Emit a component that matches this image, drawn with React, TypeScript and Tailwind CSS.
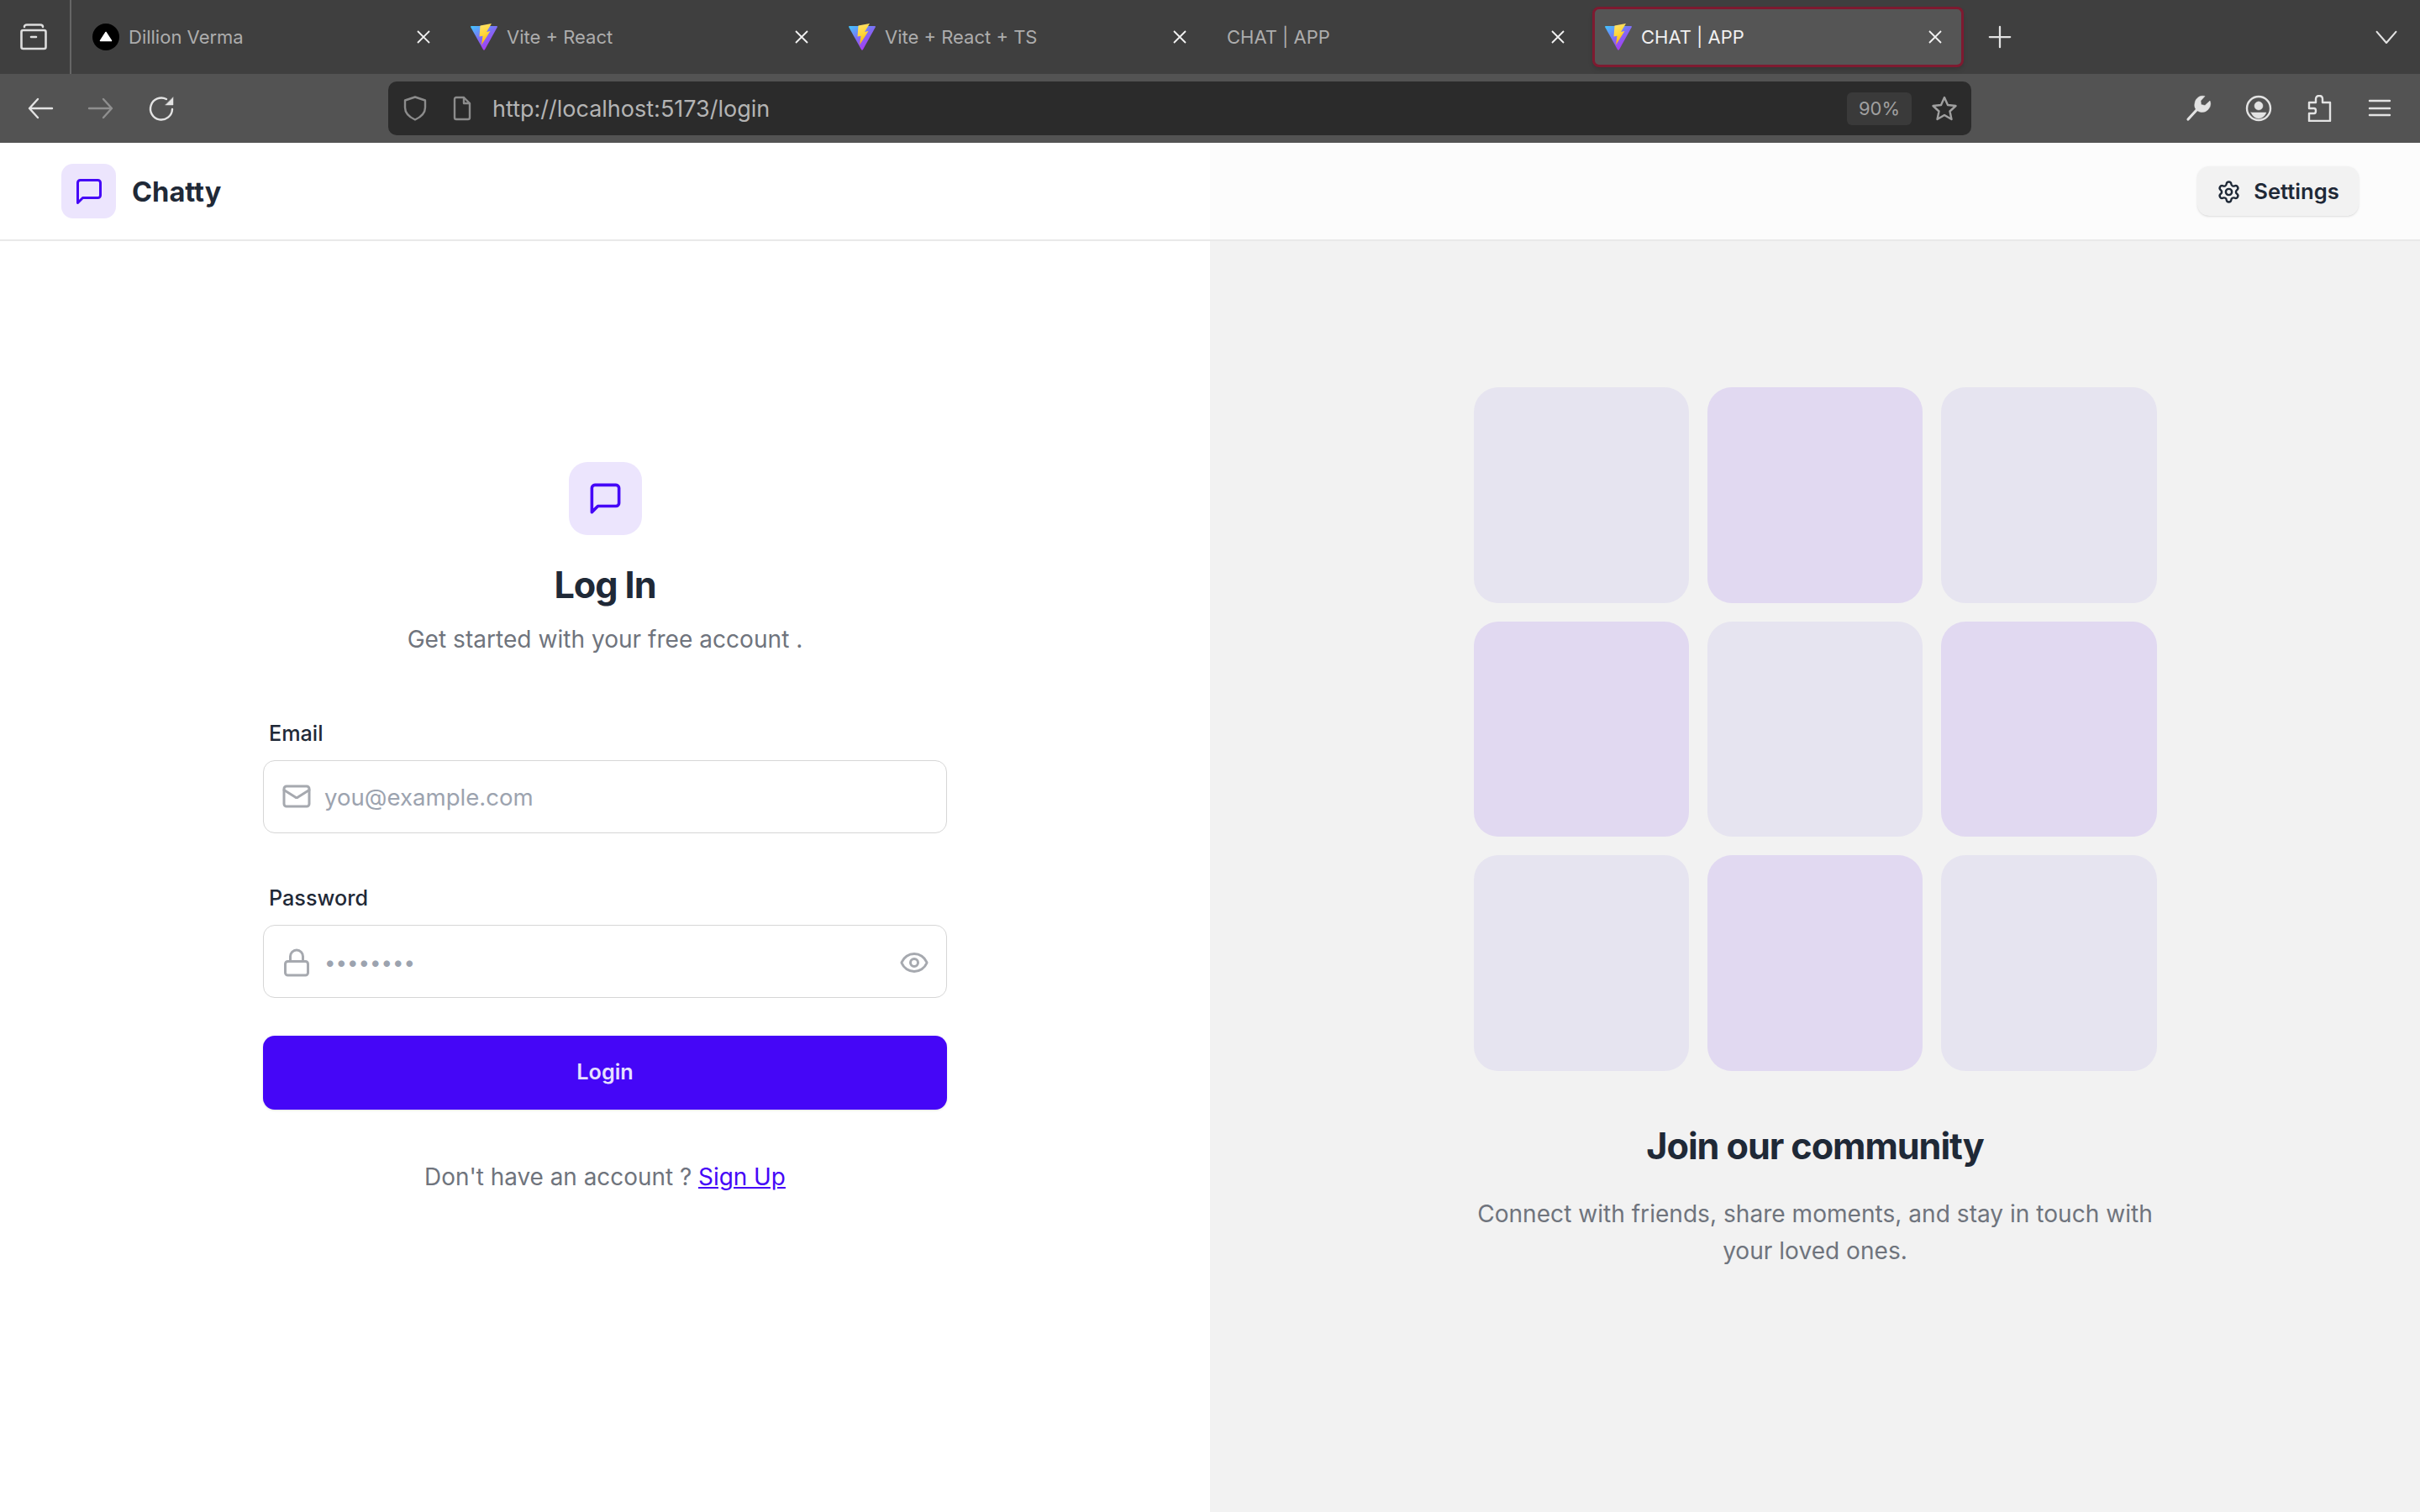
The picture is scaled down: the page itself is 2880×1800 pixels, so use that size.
import { Eye, Lock, Mail, Settings } from 'lucide-react'

const tabs = [
  { title: 'Dillion Verma', icon: 'dot' },
  { title: 'Vite + React', icon: 'vite' },
  { title: 'Vite + React + TS', icon: 'vite' },
  { title: 'CHAT | APP', icon: 'none' },
  { title: 'CHAT | APP', icon: 'vite', active: true },
]

const tiles = [false, true, false, true, false, true, false, true, false]

// ─── Browser chrome icons ──────────────────────────────────────────────

function ViteIcon() {
  return (
    <svg width="32" height="32" viewBox="0 0 32 32" className="shrink-0" aria-hidden="true">
      <defs>
        <linearGradient id="vite-a" x1="0" y1="0" x2="0.7" y2="1">
          <stop offset="0" stopColor="#41c8ff" />
          <stop offset="0.5" stopColor="#7f6cf5" />
          <stop offset="1" stopColor="#b030f0" />
        </linearGradient>
        <linearGradient id="vite-b" x1="0.3" y1="0" x2="0.6" y2="1">
          <stop offset="0" stopColor="#ffe26a" />
          <stop offset="0.5" stopColor="#ffd535" />
          <stop offset="1" stopColor="#ffa800" />
        </linearGradient>
      </defs>
      <path d="M0 4 Q0 3 1 3 H31 Q32 3 32 4 L17 31 Q16 32.5 15 31 Z" fill="url(#vite-a)" />
      <path d="M25 0 L11.5 2.5 L10.5 15.5 L14.5 14.7 L13 25.5 L23.5 9 L19 10 Z" fill="url(#vite-b)" />
    </svg>
  )
}

function DotIcon() {
  return (
    <svg width="32" height="32" viewBox="0 0 32 32" className="shrink-0" aria-hidden="true">
      <circle cx="16" cy="16" r="16" fill="#000" />
      <path d="M16 10.5 L22.5 20.5 H9.5 Z" fill="#fff" stroke="#fff" strokeWidth="1.5" strokeLinejoin="round" />
    </svg>
  )
}

function CloseIcon() {
  return (
    <svg width="18" height="18" viewBox="0 0 18 18" fill="none" stroke="#f2f2f2" strokeWidth="1.8" aria-hidden="true">
      <path d="M2 2 L16 16 M16 2 L2 16" />
    </svg>
  )
}

function ChromeIcon({
  d,
  fill,
  size = 32,
  color = '#e3e3e3',
  width = 2.4,
}: {
  d: string
  fill?: string
  size?: number
  color?: string
  width?: number
}) {
  return (
    <svg
      width={size}
      height={size}
      viewBox="0 0 32 32"
      fill="none"
      stroke={color}
      strokeWidth={width}
      strokeLinecap="round"
      strokeLinejoin="round"
      className="shrink-0"
      aria-hidden="true"
    >
      <path d={d} />
      {fill && <path d={fill} fill={color} strokeWidth={0.5} />}
    </svg>
  )
}

/** Speech bubble with the square tail used by the app's logo. */
function ChatIcon({ className }: { className: string }) {
  return (
    <svg
      viewBox="0 0 24 24"
      fill="none"
      stroke="currentColor"
      strokeWidth="2"
      strokeLinecap="round"
      strokeLinejoin="round"
      className={className}
      aria-hidden="true"
    >
      <path d="M21 15a2 2 0 0 1-2 2H7l-4 4V5a2 2 0 0 1 2-2h14a2 2 0 0 1 2 2z" />
    </svg>
  )
}

function TabBar() {
  return (
    <div className="flex h-[88px] items-center bg-[#3f3f3f]">
      <div className="flex h-full w-[85px] shrink-0 items-center justify-center border-r-2 border-[#666666] pr-[4px]">
        <ChromeIcon
          size={32}
          width={2.6}
          color="#dddddd"
          d="M5 4 Q5 1.5 8 1.5 H24 Q27 1.5 27 4 M1.5 10 Q1.5 8 3.5 8 H28.5 Q30.5 8 30.5 10 V28 Q30.5 30 28.5 30 H3.5 Q1.5 30 1.5 28 Z M13 16 H19"
        />
      </div>
      <div className="flex h-full flex-1 items-center pl-[10px]">
        {tabs.map((tab, i) => (
          <div
            key={i}
            className={
              tab.active
                ? 'ml-[10px] flex h-[72px] w-[442px] items-center rounded-[8px] border-[3px] border-[#7e1a30] bg-[#555555] pl-[12px] pr-[22px] shadow-md'
                : i > 0
                  ? 'ml-[10px] flex h-[72px] w-[440px] items-center pl-[15px] pr-[22px]'
                  : 'flex h-[72px] w-[440px] items-center pl-[15px] pr-[22px]'
            }
          >
            {tab.icon === 'dot' && <DotIcon />}
            {tab.icon === 'vite' && <ViteIcon />}
            <span
              className={`flex-1 truncate pt-[1px] text-[22px] ${tab.icon === 'none' ? '' : 'ml-[11px]'} ${tab.active ? 'text-[#f0f0f0]' : 'text-[#adadad]'}`}
            >
              {tab.title}
            </span>
            <CloseIcon />
          </div>
        ))}
        <div className="ml-[28px]">
          <ChromeIcon size={30} d="M16 3 V29 M3 16 H29" />
        </div>
        <div className="ml-auto mr-[26px]">
          <ChromeIcon size={28} d="M3 9 L16 24 L29 9" />
        </div>
      </div>
    </div>
  )
}

function Toolbar() {
  return (
    <div className="flex h-[82px] items-center bg-[#535353] pl-[32px] pr-[32px]">
      <div className="flex w-[430px] shrink-0 items-center gap-[40px]">
        <ChromeIcon d="M30 16 H3 M13 5 L3 16 L13 27" />
        <ChromeIcon d="M2 16 H29 M19 5 L29 16 L19 27" color="#8f8f8f" />
        <ChromeIcon d="M29 17 A13 13 0 1 1 22 5" fill="M30 3 V12 H21 Z" />
      </div>
      <div className="flex h-[64px] w-[1884px] shrink-0 items-center rounded-[10px] bg-[#2b2b2b] pl-[16px] pr-[16px]">
        <ChromeIcon color="#8c8c8c" d="M16 2.5 L28 6.5 V15 Q28 24 16 29.5 Q4 24 4 15 V6.5 Z" />
        <div className="ml-[24px]">
          <ChromeIcon color="#8c8c8c" d="M7 5 Q7 3 9 3 H18 L25 10 V27 Q25 29 23 29 H9 Q7 29 7 27 Z M18 3 V10 H25" />
        </div>
        <span className="ml-[20px] pt-[2px] text-[27px] text-[#b4b4b4]">http://localhost:5173/login</span>
        <div className="ml-auto flex h-[39px] w-[77px] items-center justify-center rounded-[6px] bg-[#3a3a3a] text-[22px] text-[#a0a0a0]">
          90%
        </div>
        <div className="ml-[23px]">
          <ChromeIcon
            color="#a0a0a0"
            d="M16 3 L20 12 L29.5 13 L22.5 19.5 L24.5 29 L16 24 L7.5 29 L9.5 19.5 L2.5 13 L12 12 Z"
          />
        </div>
      </div>
      <div className="ml-auto flex items-center gap-[40px]">
        <ChromeIcon
          width={3.2}
          d="M4 29 L15 17"
          fill="M15.5 19 A8.5 8.5 0 0 1 12 10 A9.5 9.5 0 0 1 24 1.5 L19 7 L19.5 11.5 L24 12.5 L30 7 A10 10 0 0 1 17.5 20 Z"
        />
        <ChromeIcon
          d="M16 2 A14 14 0 1 0 16 30 A14 14 0 1 0 16 2"
          fill="M16 8 A5 5 0 1 0 16 18 A5 5 0 1 0 16 8 Z M7 21 H25 Q22 28 16 28 Q10 28 7 21 Z"
        />
        <ChromeIcon d="M16 1 Q20 1 20 5 V9 H29 V31 H4 V22 H10 Q12 22 12 19 Q12 16 10 16 H4 V9 H12 V5 Q12 1 16 1 Z" />
        <ChromeIcon d="M4 7 H28 M4 16 H28 M4 24 H28" />
      </div>
    </div>
  )
}

// ─── Page ──────────────────────────────────────────────────────────────

function PageHeader() {
  return (
    <header className="grid h-[117px] shrink-0 grid-cols-2 border-b-2 border-[#e9e9e9]">
      <div className="flex items-center bg-white pl-[73px]">
        <div className="flex size-[65px] items-center justify-center rounded-[14px] bg-[#ece5fd]">
          <ChatIcon className="size-[36px] text-[#4506f7]" />
        </div>
        <span className="ml-[19px] pt-[2px] text-[32.6px] font-bold text-[#1f2937]">Chatty</span>
      </div>
      <div className="flex items-center justify-end bg-[#fcfcfc] pr-[73px]">
        <button
          type="button"
          className="flex h-[59px] w-[192px] items-center justify-center gap-[15px] rounded-[14px] bg-[#f2f2f2] pt-[1px] text-[25.6px] font-semibold text-[#1f2937] shadow-sm"
        >
          <Settings className="size-[29px]" />
          Settings
        </button>
      </div>
    </header>
  )
}

function Field({
  label,
  className,
  icon,
  iconTop,
  inputSize,
  type,
  placeholder,
  trailing,
}: {
  label: string
  className: string
  icon: React.ReactNode
  iconTop: string
  inputSize: string
  type: string
  placeholder: string
  trailing?: React.ReactNode
}) {
  return (
    <div className={className}>
      <label className="block px-[7px] text-[25.2px] leading-[36px] font-medium text-[#1f2937]">{label}</label>
      <div className="relative mt-[14px]">
        <span className={`absolute left-[22px] -translate-y-1/2 text-[#a6a9af] ${iconTop}`}>{icon}</span>
        <input
          type={type}
          placeholder={placeholder}
          className={`h-[87px] w-full rounded-[14px] border-[1.5px] border-[#d6d6d6] bg-white pr-[72px] pl-[72px] outline-none placeholder:text-[#9ca3af] ${inputSize}`}
        />
        {trailing && (
          <span className={`absolute right-[21px] -translate-y-1/2 text-[#a6a9af] ${iconTop}`}>{trailing}</span>
        )}
      </div>
    </div>
  )
}

function LoginForm() {
  return (
    <section className="flex flex-col items-center justify-center bg-white">
      <div className="w-[814px]">
        <div className="mx-auto flex size-[87px] items-center justify-center rounded-[22px] bg-[#ece5fd]">
          <ChatIcon className="size-[43px] text-[#4506f7]" />
        </div>
        <h1 className="mt-[30px] text-center text-[43.2px] leading-[58px] font-bold tracking-tight text-[#1f2937]">
          Log In
        </h1>
        <p className="mt-[15px] text-center text-[28.1px] leading-[43px] text-[#6f747d]">
          Get started with your free account .
        </p>
        <Field
          className="mt-[72px]"
          label="Email"
          type="email"
          placeholder="you@example.com"
          iconTop="top-1/2"
          inputSize="pt-[1px] text-[27.6px]"
          icon={<Mail className="size-[36px]" />}
        />
        <Field
          className="mt-[59px]"
          label="Password"
          type="password"
          placeholder="••••••••"
          iconTop="top-[45px]"
          inputSize="pt-[2px] text-[24px]"
          icon={<Lock className="size-[36px]" />}
          trailing={<Eye className="size-[36px]" />}
        />
        <button
          type="button"
          className="mt-[45px] h-[88px] w-full rounded-[14px] bg-[#4506f7] text-[25.2px] font-semibold text-[#e6e0ff] shadow-sm"
        >
          Login
        </button>
        <p className="mt-[58px] text-center text-[27.9px] leading-[44px] text-[#6f747d]">
          Don't have an account ?{' '}
          <a href="#signup" className="text-[#4506f7] underline">
            Sign Up
          </a>
        </p>
      </div>
    </section>
  )
}

function CommunityPanel() {
  return (
    <section className="flex flex-col items-center justify-center bg-[#f2f2f2]">
      <div className="w-[813px]">
        <div className="grid grid-cols-3 gap-[22px]">
          {tiles.map((strong, i) => (
            <div
              key={i}
              className={`aspect-square rounded-[29px] ${strong ? 'bg-[#e1d9f1]' : 'bg-[#e6e4f0]'}`}
            />
          ))}
        </div>
        <h2 className="mt-[60px] text-center text-[43.2px] leading-[58px] font-bold tracking-tight text-[#1f2937]">
          Join our community
        </h2>
        <p className="mt-[30px] text-center text-[28.1px] leading-[44px] text-[#6f747d]">
          Connect with friends, share moments, and stay in touch with your loved ones.
        </p>
      </div>
    </section>
  )
}

export default function App() {
  return (
    <div className="flex h-[1800px] w-[2880px] flex-col overflow-hidden font-['Inter',sans-serif]">
      <TabBar />
      <Toolbar />
      <PageHeader />
      <main className="grid flex-1 grid-cols-2 bg-white">
        <div className="grid bg-white pb-[115px]">
          <LoginForm />
        </div>
        <div className="grid bg-[#f2f2f2] pb-[115px]">
          <CommunityPanel />
        </div>
      </main>
    </div>
  )
}
